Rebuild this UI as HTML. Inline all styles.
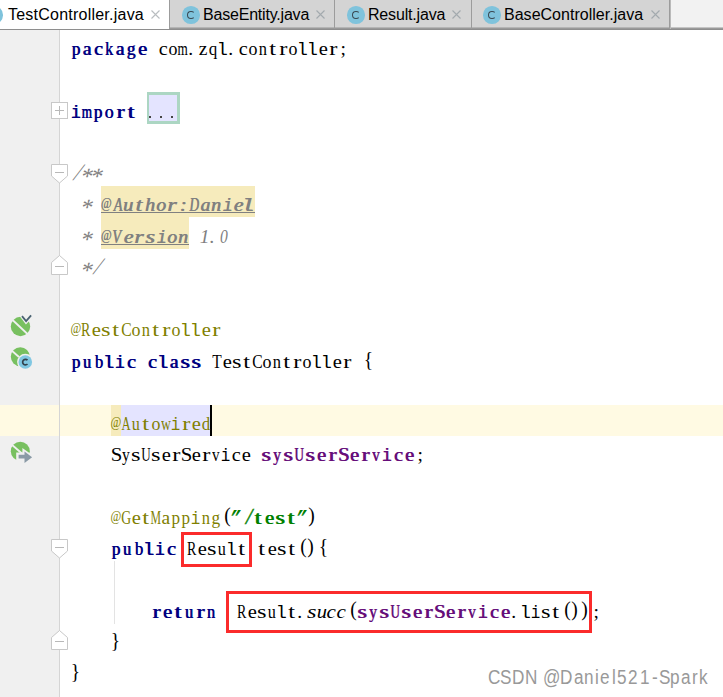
<!DOCTYPE html>
<html><head><meta charset="utf-8">
<style>
*{margin:0;padding:0;box-sizing:border-box}
html,body{width:723px;height:697px;overflow:hidden;background:#fff}
body{position:relative;font-family:"Liberation Sans",sans-serif}
.abs{position:absolute}
#tabs{position:absolute;left:0;top:0;width:723px;height:30px;background:linear-gradient(to bottom,#f2f2f2 0,#f2f2f2 27px,#c4c4c4 27px,#c4c4c4 28px,#9a9a9a 28px,#9a9a9a 29px,#8e8e8e 29px)}
#tabs .line{position:absolute;left:0;top:29px;width:723px;height:1px;background:#8e8e8e}
.tab{position:absolute;top:0;height:29px;background:linear-gradient(to bottom,#d4d4d4 0,#d4d4d4 27px,#b4b4b4 27px,#b4b4b4 28px,#999 28px)}
.tab.active{background:#fff}
.sep{position:absolute;top:0;width:2px;height:29px;background:linear-gradient(to right,#9c9c9c 0,#9c9c9c 1px,#bababa 1px)}
.tl{position:absolute;top:0;height:29px;line-height:29px;font-size:16px;color:#000;white-space:pre}
.tl span{position:absolute;top:5px;line-height:20px}
.cic{position:absolute;width:17.5px;height:17.5px;border-radius:50%;background:#7fc3dc}
.cic::after{content:"";position:absolute;left:5.2px;top:4.9px;width:7.6px;height:8px;border:1.7px solid #3a4852;border-right-color:transparent;border-radius:50%;box-sizing:border-box}
.x{position:absolute;top:10px;width:9px;height:9px}
#gutter{position:absolute;left:0;top:30px;width:59px;height:667px;background:#f0f0f0}
#gline{position:absolute;left:59px;top:30px;width:1px;height:667px;background:#d5d5d5}
.ln{position:absolute;left:71px;height:31.25px;white-space:nowrap;font-family:"Liberation Serif",serif;font-size:19.5px;line-height:31.25px;margin-top:2.9px;color:#000}
.ln i{font-style:inherit}
.c10,.c11{display:inline-block;text-align:left}
.c10 i,.c11 i{display:inline-block}
.c10{width:10px}.c11{width:11px}
.kw{color:#000080;text-shadow:0.7px 0 0 #000080}
.an{color:#808000}
.st{color:#008000;text-shadow:0.7px 0 0 #008000}
.fd{color:#660e7a;text-shadow:0.7px 0 0 #660e7a}
.cm{font-style:italic;color:#808080}
.tg{font-style:italic;color:#808080;text-shadow:0.7px 0 0 #808080}
.it{font-style:italic}
.dots{color:#444}
.rb{position:absolute;border:3px solid #fb2b2b}
#wm i{position:absolute;top:0;font-style:normal;font-size:19.5px;line-height:19.5px;color:#999;transform:scaleX(0.88);transform-origin:0 0;white-space:pre}
#wm{position:absolute;left:0;top:668px}
</style></head><body>

<div id="tabs">
  <div class="tab active" style="left:0;width:169px"></div>
  <div class="cic" style="left:-15px;top:6px"></div>
  <div class="tl" style="left:8px"><span style="letter-spacing:0.23px">TestController.java</span></div>
  <svg class="x" style="left:151px" viewBox="0 0 9 9"><path d="M0.5 0.5L8.5 8.5M8.5 0.5L0.5 8.5" stroke="#b9bdc0" stroke-width="1.1"/></svg>
  <div class="sep" style="left:169px"></div>

  <div class="tab" style="left:170px;width:164px"></div>
  <div class="cic" style="left:182px;top:6px"></div>
  <div class="tl" style="left:203px"><span style="letter-spacing:-0.2px">BaseEntity.java</span></div>
  <svg class="x" style="left:316px" viewBox="0 0 9 9"><path d="M0.5 0.5L8.5 8.5M8.5 0.5L0.5 8.5" stroke="#a3aaae" stroke-width="1.1"/></svg>
  <div class="sep" style="left:334px"></div>

  <div class="tab" style="left:335px;width:136px"></div>
  <div class="cic" style="left:347px;top:6px"></div>
  <div class="tl" style="left:368px"><span style="letter-spacing:-0.18px">Result.java</span></div>
  <svg class="x" style="left:452px" viewBox="0 0 9 9"><path d="M0.5 0.5L8.5 8.5M8.5 0.5L0.5 8.5" stroke="#a3aaae" stroke-width="1.1"/></svg>
  <div class="sep" style="left:471px"></div>

  <div class="tab" style="left:472px;width:197px"></div>
  <div class="cic" style="left:483px;top:6px"></div>
  <div class="tl" style="left:504px"><span style="letter-spacing:0.02px">BaseController.java</span></div>
  <svg class="x" style="left:651px" viewBox="0 0 9 9"><path d="M0.5 0.5L8.5 8.5M8.5 0.5L0.5 8.5" stroke="#a3aaae" stroke-width="1.1"/></svg>
  <div class="sep" style="left:669px"></div>
  <div class="line"></div>
</div>

<div id="gutter"></div>
<!-- caret row -->
<div class="abs" style="left:0;top:405px;width:723px;height:31px;background:#fffae3"></div>
<div id="gline"></div>

<!-- highlights -->
<div class="abs" style="left:147px;top:92px;width:33px;height:32px;background:#e4e4ff;border:3px solid #acd6c3;border-left-width:2px"></div>
<div class="abs" style="left:149px;top:116px;width:2px;height:2px;background:#444"></div><div class="abs" style="left:160px;top:116px;width:2px;height:2px;background:#444"></div><div class="abs" style="left:171px;top:116px;width:2px;height:2px;background:#444"></div>
<div class="abs" style="left:101px;top:186px;width:154px;height:31px;background:#f6ebbc"></div>
<div class="abs" style="left:101px;top:217px;width:88px;height:32px;background:#f6ebbc"></div>
<div class="abs" style="left:111px;top:405px;width:10px;height:31px;background:#f6ebbc"></div>
<div class="abs" style="left:121px;top:405px;width:89px;height:31px;background:#e4e4ff"></div>
<div class="abs" style="left:210px;top:405px;width:2px;height:31px;background:#000"></div>
<div class="abs" style="left:114px;top:561px;width:1px;height:63px;background:#e3e3e3"></div>

<!-- code lines: top = 30 + (i-1)*31.25 + off -->
<div id="code">
<div class="ln" style="top:30px"><span class="kw"><i class="c11"><i style="margin-left:0.35px;transform:scaleX(0.876);transform-origin:4.65px 0">p</i></i><i class="c11"><i style="margin-left:0.46px">a</i></i><i class="c11"><i style="margin-left:0.60px;transform:scaleX(1.039);transform-origin:4.40px 0">c</i></i><i class="c11"><i style="margin-left:-0.06px;transform:scaleX(0.810);transform-origin:5.06px 0">k</i></i><i class="c11"><i style="margin-left:0.46px">a</i></i><i class="c11"><i style="margin-left:-0.11px;transform:scaleX(0.890);transform-origin:5.11px 0">g</i></i><i class="c11"><i style="margin-left:0.63px;transform:scaleX(1.053);transform-origin:4.37px 0">e</i></i></span><i class="c10"></i><i class="c10"><i style="margin-left:0.60px;transform:scaleX(1.039);transform-origin:4.40px 0">c</i></i><i class="c10"><i style="margin-left:0.12px;transform:scaleX(0.920);transform-origin:4.88px 0">o</i></i><i class="c10"><i style="margin-left:-2.64px;transform:scaleX(0.678);transform-origin:7.64px 0">m</i></i><i class="c10"><i style="margin-left:0.21px">.</i></i><i class="c10"><i style="margin-left:0.68px">z</i></i><i class="c10"><i style="margin-left:-0.05px;transform:scaleX(0.874);transform-origin:5.05px 0">q</i></i><i class="c10"><i style="margin-left:-1.25px;font-family:Liberation Mono;font-size:18.5px">l</i></i><i class="c10"><i style="margin-left:0.21px">.</i></i><i class="c10"><i style="margin-left:0.60px;transform:scaleX(1.039);transform-origin:4.40px 0">c</i></i><i class="c10"><i style="margin-left:0.12px;transform:scaleX(0.920);transform-origin:4.88px 0">o</i></i><i class="c10"><i style="margin-left:0.05px;transform:scaleX(0.844);transform-origin:4.95px 0">n</i></i><i class="c10"><i style="margin-left:2.25px;transform:scaleX(1.250);transform-origin:2.75px 0">t</i></i><i class="c10"><i style="margin-left:1.64px;transform:scaleX(1.250);transform-origin:3.36px 0">r</i></i><i class="c10"><i style="margin-left:0.12px;transform:scaleX(0.920);transform-origin:4.88px 0">o</i></i><i class="c10"><i style="margin-left:-1.25px;font-family:Liberation Mono;font-size:18.5px">l</i></i><i class="c10"><i style="margin-left:-1.25px;font-family:Liberation Mono;font-size:18.5px">l</i></i><i class="c10"><i style="margin-left:0.63px;transform:scaleX(1.053);transform-origin:4.37px 0">e</i></i><i class="c10"><i style="margin-left:1.64px;transform:scaleX(1.250);transform-origin:3.36px 0">r</i></i><i class="c10"><i style="margin-left:2.53px">;</i></i></div>
<div class="ln" style="top:93px"><span class="kw"><i class="c11"><i style="margin-left:-0.73px;font-family:Liberation Mono;font-size:18.5px;transform:scaleX(0.857);transform-origin:5.73px 0">i</i></i><i class="c11"><i style="margin-left:-2.64px;transform:scaleX(0.678);transform-origin:7.64px 0">m</i></i><i class="c11"><i style="margin-left:0.35px;transform:scaleX(0.876);transform-origin:4.65px 0">p</i></i><i class="c11"><i style="margin-left:0.12px;transform:scaleX(0.920);transform-origin:4.88px 0">o</i></i><i class="c11"><i style="margin-left:1.64px;transform:scaleX(1.250);transform-origin:3.36px 0">r</i></i><i class="c11"><i style="margin-left:2.25px;transform:scaleX(1.250);transform-origin:2.75px 0">t</i></i></span></div>
<div class="ln" style="top:155px"><span class="cm"><i class="c10"><i style="margin-left:2.00px;transform:skewX(-19deg) scaleY(1.2);transform-origin:3.00px 22.4px">/</i></i><i class="c10"><i style="margin-left:-0.81px;transform:translate(2.5px,2px) skewX(-14deg) scale(1.2);transform-origin:5.81px 11.4px">*</i></i><i class="c10"><i style="margin-left:-0.81px;transform:translate(2.5px,2px) skewX(-14deg) scale(1.2);transform-origin:5.81px 11.4px">*</i></i></span></div>
<div class="ln" style="top:186px"><span class="cm"><i class="c10"></i><i class="c10"><i style="margin-left:-0.81px;transform:translate(2.5px,2px) skewX(-14deg) scale(1.2);transform-origin:5.81px 11.4px">*</i></i><i class="c10"></i></span><span class="tg"><i class="c11"><i style="margin-left:-4.09px;transform:scale(0.598,0.78);transform-origin:9.09px 9px">@</i></i><i class="c11"><i style="margin-left:-0.46px;transform:scaleX(0.728);transform-origin:5.46px 0">A</i></i><i class="c11"><i style="margin-left:-0.01px;transform:scaleX(1.053);transform-origin:5.01px 0">u</i></i><i class="c11"><i style="margin-left:1.67px;transform:scaleX(1.250);transform-origin:3.33px 0">t</i></i><i class="c11"><i style="margin-left:0.18px;transform:scaleX(1.032);transform-origin:4.82px 0">h</i></i><i class="c11"><i style="margin-left:0.12px">o</i></i><i class="c11"><i style="margin-left:0.78px;transform:scaleX(1.240);transform-origin:4.22px 0">r</i></i><i class="c11"><i style="margin-left:1.87px">:</i></i><i class="c11"><i style="margin-left:-1.78px;transform:scaleX(0.678);transform-origin:6.78px 0">D</i></i><i class="c11"><i style="margin-left:0.20px">a</i></i><i class="c11"><i style="margin-left:0.18px;transform:scaleX(1.031);transform-origin:4.82px 0">n</i></i><i class="c11"><i style="margin-left:0.09px;font-family:Liberation Mono;font-size:18.5px;transform:scaleX(0.833);transform-origin:4.91px 0">i</i></i><i class="c11"><i style="margin-left:0.59px;transform:scaleX(1.116);transform-origin:4.41px 0">e</i></i><i class="c11"><i style="margin-left:-1.60px;font-family:Liberation Mono;font-size:18.5px;transform:scaleX(1.250);transform-origin:6.60px 0">l</i></i></span></div>
<div class="ln" style="top:218px"><span class="cm"><i class="c10"></i><i class="c10"><i style="margin-left:-0.81px;transform:translate(2.5px,2px) skewX(-14deg) scale(1.2);transform-origin:5.81px 11.4px">*</i></i><i class="c10"></i></span><span class="tg"><i class="c11"><i style="margin-left:-4.09px;transform:scale(0.598,0.78);transform-origin:9.09px 9px">@</i></i><i class="c11"><i style="margin-left:-2.40px;transform:scaleX(0.744);transform-origin:7.40px 0">V</i></i><i class="c11"><i style="margin-left:0.59px;transform:scaleX(1.116);transform-origin:4.41px 0">e</i></i><i class="c11"><i style="margin-left:0.78px;transform:scaleX(1.240);transform-origin:4.22px 0">r</i></i><i class="c11"><i style="margin-left:1.38px;transform:scaleX(1.250);transform-origin:3.62px 0">s</i></i><i class="c11"><i style="margin-left:0.09px;font-family:Liberation Mono;font-size:18.5px;transform:scaleX(0.833);transform-origin:4.91px 0">i</i></i><i class="c11"><i style="margin-left:0.12px">o</i></i><i class="c11"><i style="margin-left:0.18px;transform:scaleX(1.031);transform-origin:4.82px 0">n</i></i></span><span class="cm"><i class="c10"></i><i class="c10"><i style="margin-left:0.82px">1</i></i><i class="c10"><i style="margin-left:0.69px">.</i></i><i class="c10"><i style="margin-left:-0.13px;transform:scaleX(0.800);transform-origin:5.13px 0">0</i></i></span></div>
<div class="ln" style="top:249px"><span class="cm"><i class="c10"></i><i class="c10"><i style="margin-left:-0.81px;transform:translate(2.5px,2px) skewX(-14deg) scale(1.2);transform-origin:5.81px 11.4px">*</i></i><i class="c10"><i style="margin-left:2.00px;transform:skewX(-19deg) scaleY(1.2);transform-origin:3.00px 22.4px">/</i></i></span></div>
<div class="ln" style="top:311px"><span class="an"><i class="c10"><i style="margin-left:-3.98px;transform:scale(0.598,0.78);transform-origin:8.98px 9px">@</i></i><i class="c10"><i style="margin-left:-1.77px;transform:scaleX(0.717);transform-origin:6.77px 0">R</i></i><i class="c10"><i style="margin-left:0.63px;transform:scaleX(1.053);transform-origin:4.37px 0">e</i></i><i class="c10"><i style="margin-left:1.16px;transform:scaleX(1.249);transform-origin:3.84px 0">s</i></i><i class="c10"><i style="margin-left:2.25px;transform:scaleX(1.250);transform-origin:2.75px 0">t</i></i><i class="c10"><i style="margin-left:-1.37px;transform:scaleX(0.800);transform-origin:6.37px 0">C</i></i><i class="c10"><i style="margin-left:0.12px;transform:scaleX(0.920);transform-origin:4.88px 0">o</i></i><i class="c10"><i style="margin-left:0.05px;transform:scaleX(0.844);transform-origin:4.95px 0">n</i></i><i class="c10"><i style="margin-left:2.25px;transform:scaleX(1.250);transform-origin:2.75px 0">t</i></i><i class="c10"><i style="margin-left:1.64px;transform:scaleX(1.250);transform-origin:3.36px 0">r</i></i><i class="c10"><i style="margin-left:0.12px;transform:scaleX(0.920);transform-origin:4.88px 0">o</i></i><i class="c10"><i style="margin-left:-1.25px;font-family:Liberation Mono;font-size:18.5px">l</i></i><i class="c10"><i style="margin-left:-1.25px;font-family:Liberation Mono;font-size:18.5px">l</i></i><i class="c10"><i style="margin-left:0.63px;transform:scaleX(1.053);transform-origin:4.37px 0">e</i></i><i class="c10"><i style="margin-left:1.64px;transform:scaleX(1.250);transform-origin:3.36px 0">r</i></i></span></div>
<div class="ln" style="top:343px"><span class="kw"><i class="c11"><i style="margin-left:0.35px;transform:scaleX(0.876);transform-origin:4.65px 0">p</i></i><i class="c11"><i style="margin-left:0.16px;transform:scaleX(0.830);transform-origin:4.84px 0">u</i></i><i class="c11"><i style="margin-left:0.50px;transform:scaleX(0.844);transform-origin:4.50px 0">b</i></i><i class="c11"><i style="margin-left:-1.25px;font-family:Liberation Mono;font-size:18.5px">l</i></i><i class="c11"><i style="margin-left:-0.73px;font-family:Liberation Mono;font-size:18.5px;transform:scaleX(0.857);transform-origin:5.73px 0">i</i></i><i class="c11"><i style="margin-left:0.60px;transform:scaleX(1.039);transform-origin:4.40px 0">c</i></i></span><i class="c10"></i><span class="kw"><i class="c11"><i style="margin-left:0.60px;transform:scaleX(1.039);transform-origin:4.40px 0">c</i></i><i class="c11"><i style="margin-left:-1.25px;font-family:Liberation Mono;font-size:18.5px">l</i></i><i class="c11"><i style="margin-left:0.46px">a</i></i><i class="c11"><i style="margin-left:1.16px;transform:scaleX(1.249);transform-origin:3.84px 0">s</i></i><i class="c11"><i style="margin-left:1.16px;transform:scaleX(1.249);transform-origin:3.84px 0">s</i></i></span><i class="c10"></i><i class="c10"><i style="margin-left:-0.97px;transform:scaleX(0.792);transform-origin:5.97px 0">T</i></i><i class="c10"><i style="margin-left:0.63px;transform:scaleX(1.053);transform-origin:4.37px 0">e</i></i><i class="c10"><i style="margin-left:1.16px;transform:scaleX(1.249);transform-origin:3.84px 0">s</i></i><i class="c10"><i style="margin-left:2.25px;transform:scaleX(1.250);transform-origin:2.75px 0">t</i></i><i class="c10"><i style="margin-left:-1.37px;transform:scaleX(0.800);transform-origin:6.37px 0">C</i></i><i class="c10"><i style="margin-left:0.12px;transform:scaleX(0.920);transform-origin:4.88px 0">o</i></i><i class="c10"><i style="margin-left:0.05px;transform:scaleX(0.844);transform-origin:4.95px 0">n</i></i><i class="c10"><i style="margin-left:2.25px;transform:scaleX(1.250);transform-origin:2.75px 0">t</i></i><i class="c10"><i style="margin-left:1.64px;transform:scaleX(1.250);transform-origin:3.36px 0">r</i></i><i class="c10"><i style="margin-left:0.12px;transform:scaleX(0.920);transform-origin:4.88px 0">o</i></i><i class="c10"><i style="margin-left:-1.25px;font-family:Liberation Mono;font-size:18.5px">l</i></i><i class="c10"><i style="margin-left:-1.25px;font-family:Liberation Mono;font-size:18.5px">l</i></i><i class="c10"><i style="margin-left:0.63px;transform:scaleX(1.053);transform-origin:4.37px 0">e</i></i><i class="c10"><i style="margin-left:1.64px;transform:scaleX(1.250);transform-origin:3.36px 0">r</i></i><i class="c10"></i><i class="c10"><i style="margin-left:1.82px;position:relative;top:-2.5px;transform:scaleY(1.1);transform-origin:4.68px 7px">{</i></i></div>
<div class="ln" style="top:405px"><i class="c10"></i><i class="c10"></i><i class="c10"></i><i class="c10"></i><span class="an"><i class="c10"><i style="margin-left:-3.98px;transform:scale(0.598,0.78);transform-origin:8.98px 9px">@</i></i><i class="c10"><i style="margin-left:-2.06px;transform:scaleX(0.647);transform-origin:7.06px 0">A</i></i><i class="c10"><i style="margin-left:0.16px;transform:scaleX(0.830);transform-origin:4.84px 0">u</i></i><i class="c10"><i style="margin-left:2.25px;transform:scaleX(1.250);transform-origin:2.75px 0">t</i></i><i class="c10"><i style="margin-left:0.12px;transform:scaleX(0.920);transform-origin:4.88px 0">o</i></i><i class="c10"><i style="margin-left:-2.01px;transform:scaleX(0.701);transform-origin:7.01px 0">w</i></i><i class="c10"><i style="margin-left:-0.73px;font-family:Liberation Mono;font-size:18.5px;transform:scaleX(0.857);transform-origin:5.73px 0">i</i></i><i class="c10"><i style="margin-left:1.64px;transform:scaleX(1.250);transform-origin:3.36px 0">r</i></i><i class="c10"><i style="margin-left:0.63px;transform:scaleX(1.053);transform-origin:4.37px 0">e</i></i><i class="c10"><i style="margin-left:-0.11px;transform:scaleX(0.863);transform-origin:5.11px 0">d</i></i></span></div>
<div class="ln" style="top:436px"><i class="c10"></i><i class="c10"></i><i class="c10"></i><i class="c10"></i><i class="c10"><i style="margin-left:-0.47px;transform:scaleX(1.068);transform-origin:5.47px 0">S</i></i><i class="c10"><i style="margin-left:0.04px;transform:scaleX(0.805);transform-origin:4.96px 0">y</i></i><i class="c10"><i style="margin-left:1.16px;transform:scaleX(1.249);transform-origin:3.84px 0">s</i></i><i class="c10"><i style="margin-left:-2.04px;transform:scaleX(0.671);transform-origin:7.04px 0">U</i></i><i class="c10"><i style="margin-left:1.16px;transform:scaleX(1.249);transform-origin:3.84px 0">s</i></i><i class="c10"><i style="margin-left:0.63px;transform:scaleX(1.053);transform-origin:4.37px 0">e</i></i><i class="c10"><i style="margin-left:1.64px;transform:scaleX(1.250);transform-origin:3.36px 0">r</i></i><i class="c10"><i style="margin-left:-0.47px;transform:scaleX(1.068);transform-origin:5.47px 0">S</i></i><i class="c10"><i style="margin-left:0.63px;transform:scaleX(1.053);transform-origin:4.37px 0">e</i></i><i class="c10"><i style="margin-left:1.64px;transform:scaleX(1.250);transform-origin:3.36px 0">r</i></i><i class="c10"><i style="margin-left:0.12px;transform:scaleX(0.779);transform-origin:4.88px 0">v</i></i><i class="c10"><i style="margin-left:-0.73px;font-family:Liberation Mono;font-size:18.5px;transform:scaleX(0.857);transform-origin:5.73px 0">i</i></i><i class="c10"><i style="margin-left:0.60px;transform:scaleX(1.039);transform-origin:4.40px 0">c</i></i><i class="c10"><i style="margin-left:0.63px;transform:scaleX(1.053);transform-origin:4.37px 0">e</i></i><i class="c10"></i><span class="fd"><i class="c11"><i style="margin-left:1.16px;transform:scaleX(1.249);transform-origin:3.84px 0">s</i></i><i class="c11"><i style="margin-left:0.04px;transform:scaleX(0.805);transform-origin:4.96px 0">y</i></i><i class="c11"><i style="margin-left:1.16px;transform:scaleX(1.249);transform-origin:3.84px 0">s</i></i><i class="c11"><i style="margin-left:-2.04px;transform:scaleX(0.671);transform-origin:7.04px 0">U</i></i><i class="c11"><i style="margin-left:1.16px;transform:scaleX(1.249);transform-origin:3.84px 0">s</i></i><i class="c11"><i style="margin-left:0.63px;transform:scaleX(1.053);transform-origin:4.37px 0">e</i></i><i class="c11"><i style="margin-left:1.64px;transform:scaleX(1.250);transform-origin:3.36px 0">r</i></i><i class="c11"><i style="margin-left:-0.47px;transform:scaleX(1.068);transform-origin:5.47px 0">S</i></i><i class="c11"><i style="margin-left:0.63px;transform:scaleX(1.053);transform-origin:4.37px 0">e</i></i><i class="c11"><i style="margin-left:1.64px;transform:scaleX(1.250);transform-origin:3.36px 0">r</i></i><i class="c11"><i style="margin-left:0.12px;transform:scaleX(0.779);transform-origin:4.88px 0">v</i></i><i class="c11"><i style="margin-left:-0.73px;font-family:Liberation Mono;font-size:18.5px;transform:scaleX(0.857);transform-origin:5.73px 0">i</i></i><i class="c11"><i style="margin-left:0.60px;transform:scaleX(1.039);transform-origin:4.40px 0">c</i></i><i class="c11"><i style="margin-left:0.63px;transform:scaleX(1.053);transform-origin:4.37px 0">e</i></i></span><i class="c10"><i style="margin-left:2.53px">;</i></i></div>
<div class="ln" style="top:499px"><i class="c10"></i><i class="c10"></i><i class="c10"></i><i class="c10"></i><span class="an"><i class="c10"><i style="margin-left:-3.98px;transform:scale(0.598,0.78);transform-origin:8.98px 9px">@</i></i><i class="c10"><i style="margin-left:-2.14px;transform:scaleX(0.702);transform-origin:7.14px 0">G</i></i><i class="c10"><i style="margin-left:0.63px;transform:scaleX(1.053);transform-origin:4.37px 0">e</i></i><i class="c10"><i style="margin-left:2.25px;transform:scaleX(1.250);transform-origin:2.75px 0">t</i></i><i class="c10"><i style="margin-left:-3.66px;transform:scaleX(0.605);transform-origin:8.66px 0">M</i></i><i class="c10"><i style="margin-left:0.46px">a</i></i><i class="c10"><i style="margin-left:0.35px;transform:scaleX(0.876);transform-origin:4.65px 0">p</i></i><i class="c10"><i style="margin-left:0.35px;transform:scaleX(0.876);transform-origin:4.65px 0">p</i></i><i class="c10"><i style="margin-left:-0.73px;font-family:Liberation Mono;font-size:18.5px;transform:scaleX(0.857);transform-origin:5.73px 0">i</i></i><i class="c10"><i style="margin-left:0.05px;transform:scaleX(0.844);transform-origin:4.95px 0">n</i></i><i class="c10"><i style="margin-left:-0.11px;transform:scaleX(0.890);transform-origin:5.11px 0">g</i></i></span><i class="c10"><i style="margin-left:3.14px;position:relative;top:-2.5px;transform:scaleY(1.1);transform-origin:3.36px 7px">(</i></i><span class="st"><i class="c11"><i style="margin-left:1.02px;transform:translateX(-3.5px) skewX(-30deg) scale(1.1,1.25);transform-origin:3.98px 15.5px">&quot;</i></i><i class="c11"><i style="margin-left:2.29px;transform:skewX(-14deg) scaleY(1.18);transform-origin:2.71px 23.5px">/</i></i><i class="c11"><i style="margin-left:2.25px;transform:scaleX(1.250);transform-origin:2.75px 0">t</i></i><i class="c11"><i style="margin-left:0.63px;transform:scaleX(1.053);transform-origin:4.37px 0">e</i></i><i class="c11"><i style="margin-left:1.16px;transform:scaleX(1.249);transform-origin:3.84px 0">s</i></i><i class="c11"><i style="margin-left:2.25px;transform:scaleX(1.250);transform-origin:2.75px 0">t</i></i><i class="c11"><i style="margin-left:1.02px;transform:translateX(-3.5px) skewX(-30deg) scale(1.1,1.25);transform-origin:3.98px 15.5px">&quot;</i></i></span><i class="c10"><i style="margin-left:0.37px;position:relative;top:-2.5px;transform:scaleY(1.1);transform-origin:3.13px 7px">)</i></i></div>
<div class="ln" style="top:530px"><i class="c10"></i><i class="c10"></i><i class="c10"></i><i class="c10"></i><span class="kw"><i class="c11"><i style="margin-left:0.35px;transform:scaleX(0.876);transform-origin:4.65px 0">p</i></i><i class="c11"><i style="margin-left:0.16px;transform:scaleX(0.830);transform-origin:4.84px 0">u</i></i><i class="c11"><i style="margin-left:0.50px;transform:scaleX(0.844);transform-origin:4.50px 0">b</i></i><i class="c11"><i style="margin-left:-1.25px;font-family:Liberation Mono;font-size:18.5px">l</i></i><i class="c11"><i style="margin-left:-0.73px;font-family:Liberation Mono;font-size:18.5px;transform:scaleX(0.857);transform-origin:5.73px 0">i</i></i><i class="c11"><i style="margin-left:0.60px;transform:scaleX(1.039);transform-origin:4.40px 0">c</i></i></span><i class="c10"></i><i class="c10"><i style="margin-left:-1.77px;transform:scaleX(0.717);transform-origin:6.77px 0">R</i></i><i class="c10"><i style="margin-left:0.63px;transform:scaleX(1.053);transform-origin:4.37px 0">e</i></i><i class="c10"><i style="margin-left:1.16px;transform:scaleX(1.249);transform-origin:3.84px 0">s</i></i><i class="c10"><i style="margin-left:0.16px;transform:scaleX(0.830);transform-origin:4.84px 0">u</i></i><i class="c10"><i style="margin-left:-1.25px;font-family:Liberation Mono;font-size:18.5px">l</i></i><i class="c10"><i style="margin-left:2.25px;transform:scaleX(1.250);transform-origin:2.75px 0">t</i></i><i class="c10"></i><i class="c10"><i style="margin-left:2.25px;transform:scaleX(1.250);transform-origin:2.75px 0">t</i></i><i class="c10"><i style="margin-left:0.63px;transform:scaleX(1.053);transform-origin:4.37px 0">e</i></i><i class="c10"><i style="margin-left:1.16px;transform:scaleX(1.249);transform-origin:3.84px 0">s</i></i><i class="c10"><i style="margin-left:2.25px;transform:scaleX(1.250);transform-origin:2.75px 0">t</i></i><i class="c10"><i style="margin-left:3.14px;position:relative;top:-2.5px;transform:scaleY(1.1);transform-origin:3.36px 7px">(</i></i><i class="c10"><i style="margin-left:0.37px;position:relative;top:-2.5px;transform:scaleY(1.1);transform-origin:3.13px 7px">)</i></i><i class="c10"><i style="margin-left:1.82px;position:relative;top:-2.5px;transform:scaleY(1.1);transform-origin:4.68px 7px">{</i></i></div>
<div class="ln" style="top:593px"><i class="c10"></i><i class="c10"></i><i class="c10"></i><i class="c10"></i><i class="c10"></i><i class="c10"></i><i class="c10"></i><i class="c10"></i><span class="kw"><i class="c11"><i style="margin-left:1.64px;transform:scaleX(1.250);transform-origin:3.36px 0">r</i></i><i class="c11"><i style="margin-left:0.63px;transform:scaleX(1.053);transform-origin:4.37px 0">e</i></i><i class="c11"><i style="margin-left:2.25px;transform:scaleX(1.250);transform-origin:2.75px 0">t</i></i><i class="c11"><i style="margin-left:0.16px;transform:scaleX(0.830);transform-origin:4.84px 0">u</i></i><i class="c11"><i style="margin-left:1.64px;transform:scaleX(1.250);transform-origin:3.36px 0">r</i></i><i class="c11"><i style="margin-left:0.05px;transform:scaleX(0.844);transform-origin:4.95px 0">n</i></i></span><i class="c10"></i><i class="c10"></i><i class="c10"><i style="margin-left:-1.77px;transform:scaleX(0.717);transform-origin:6.77px 0">R</i></i><i class="c10"><i style="margin-left:0.63px;transform:scaleX(1.053);transform-origin:4.37px 0">e</i></i><i class="c10"><i style="margin-left:1.16px;transform:scaleX(1.249);transform-origin:3.84px 0">s</i></i><i class="c10"><i style="margin-left:0.16px;transform:scaleX(0.830);transform-origin:4.84px 0">u</i></i><i class="c10"><i style="margin-left:-1.25px;font-family:Liberation Mono;font-size:18.5px">l</i></i><i class="c10"><i style="margin-left:2.25px;transform:scaleX(1.250);transform-origin:2.75px 0">t</i></i><i class="c10"><i style="margin-left:0.21px">.</i></i><span class="it"><i class="c10"><i style="margin-left:1.38px;transform:scaleX(1.250);transform-origin:3.62px 0">s</i></i><i class="c10"><i style="margin-left:-0.01px;transform:scaleX(1.053);transform-origin:5.01px 0">u</i></i><i class="c10"><i style="margin-left:0.48px;transform:scaleX(1.083);transform-origin:4.52px 0">c</i></i><i class="c10"><i style="margin-left:0.48px;transform:scaleX(1.083);transform-origin:4.52px 0">c</i></i></span><i class="c10"><i style="margin-left:3.14px;position:relative;top:-2.5px;transform:scaleY(1.1);transform-origin:3.36px 7px">(</i></i><span class="fd"><i class="c11"><i style="margin-left:1.16px;transform:scaleX(1.249);transform-origin:3.84px 0">s</i></i><i class="c11"><i style="margin-left:0.04px;transform:scaleX(0.805);transform-origin:4.96px 0">y</i></i><i class="c11"><i style="margin-left:1.16px;transform:scaleX(1.249);transform-origin:3.84px 0">s</i></i><i class="c11"><i style="margin-left:-2.04px;transform:scaleX(0.671);transform-origin:7.04px 0">U</i></i><i class="c11"><i style="margin-left:1.16px;transform:scaleX(1.249);transform-origin:3.84px 0">s</i></i><i class="c11"><i style="margin-left:0.63px;transform:scaleX(1.053);transform-origin:4.37px 0">e</i></i><i class="c11"><i style="margin-left:1.64px;transform:scaleX(1.250);transform-origin:3.36px 0">r</i></i><i class="c11"><i style="margin-left:-0.47px;transform:scaleX(1.068);transform-origin:5.47px 0">S</i></i><i class="c11"><i style="margin-left:0.63px;transform:scaleX(1.053);transform-origin:4.37px 0">e</i></i><i class="c11"><i style="margin-left:1.64px;transform:scaleX(1.250);transform-origin:3.36px 0">r</i></i><i class="c11"><i style="margin-left:0.12px;transform:scaleX(0.779);transform-origin:4.88px 0">v</i></i><i class="c11"><i style="margin-left:-0.73px;font-family:Liberation Mono;font-size:18.5px;transform:scaleX(0.857);transform-origin:5.73px 0">i</i></i><i class="c11"><i style="margin-left:0.60px;transform:scaleX(1.039);transform-origin:4.40px 0">c</i></i><i class="c11"><i style="margin-left:0.63px;transform:scaleX(1.053);transform-origin:4.37px 0">e</i></i></span><i class="c10"><i style="margin-left:0.21px">.</i></i><i class="c10"><i style="margin-left:-1.25px;font-family:Liberation Mono;font-size:18.5px">l</i></i><i class="c10"><i style="margin-left:-0.73px;font-family:Liberation Mono;font-size:18.5px;transform:scaleX(0.857);transform-origin:5.73px 0">i</i></i><i class="c10"><i style="margin-left:1.16px;transform:scaleX(1.249);transform-origin:3.84px 0">s</i></i><i class="c10"><i style="margin-left:2.25px;transform:scaleX(1.250);transform-origin:2.75px 0">t</i></i><i class="c10"><i style="margin-left:3.14px;position:relative;top:-2.5px;transform:scaleY(1.1);transform-origin:3.36px 7px">(</i></i><i class="c10"><i style="margin-left:0.37px;position:relative;top:-2.5px;transform:scaleY(1.1);transform-origin:3.13px 7px">)</i></i><i class="c10"><i style="margin-left:0.37px;position:relative;top:-2.5px;transform:scaleY(1.1);transform-origin:3.13px 7px">)</i></i><i class="c10"><i style="margin-left:2.53px">;</i></i></div>
<div class="ln" style="top:624px"><i class="c10"></i><i class="c10"></i><i class="c10"></i><i class="c10"></i><i class="c10"><i style="margin-left:-0.18px;position:relative;top:-2.5px;transform:scaleY(1.1);transform-origin:4.68px 7px">}</i></i></div>
<div class="ln" style="top:655px"><i class="c10"><i style="margin-left:-0.18px;position:relative;top:-2.5px;transform:scaleY(1.1);transform-origin:4.68px 7px">}</i></i></div>
</div>

<!-- tag underlines -->
<div class="abs" style="left:101px;top:212px;width:154px;height:1px;background:#808080"></div>
<div class="abs" style="left:101px;top:244px;width:88px;height:1px;background:#808080"></div>

<!-- fold markers -->
<svg class="abs" style="left:0;top:0" width="723" height="697">
  <g fill="#fff" stroke="#c8c8c8" stroke-width="1">
    <rect x="51.5" y="102.5" width="16" height="16"/>
    <path d="M51.5 164.5H67.5V176L59.5 183L51.5 176Z"/>
    <path d="M51.5 274.5H67.5V262.5L59.5 255.5L51.5 262.5Z"/>
    <path d="M51.5 539.5H67.5V551L59.5 558L51.5 551Z"/>
    <path d="M51.5 649.5H67.5V637.5L59.5 630.5L51.5 637.5Z"/>
  </g>
  <g stroke="#b8b8b8" stroke-width="1">
    <path d="M55 110.5H64M59.5 106V115"/>
    <path d="M55 172.5H64"/>
    <path d="M55 266.5H64"/>
    <path d="M55 547.5H64"/>
    <path d="M55 641.5H64"/>
  </g>
</svg>

<!-- gutter icons -->
<svg class="abs" style="left:0;top:0" width="60" height="697">
  <!-- bean with check -->
  <g>
    <circle cx="20.5" cy="326.5" r="9.7" fill="#78c060"/>
    <path d="M11 318.5L28 334.5" stroke="#f0f0f0" stroke-width="1.8"/>
    <path d="M21.3 315L26.1 321.3L32.3 314.8" stroke="#f0f0f0" stroke-width="4" fill="none"/>
    <path d="M22 316.2L26.1 321L31.1 315.3" stroke="#4a6272" stroke-width="1.8" fill="none"/>
  </g>
  <!-- bean with class -->
  <g>
    <circle cx="20.3" cy="356.7" r="9.5" fill="#78c060"/>
    <path d="M11 350L19 357" stroke="#f0f0f0" stroke-width="1.8"/>
    <circle cx="25.3" cy="362" r="8.2" fill="#f0f0f0"/>
    <circle cx="25.3" cy="362" r="6.8" fill="#80c7e2"/>
    <path d="M27.5 360.2A2.8 2.8 0 1 0 27.5 364" stroke="#34434e" stroke-width="1.7" fill="none"/>
  </g>
  <!-- bean with arrow -->
  <g>
    <circle cx="20.3" cy="451.2" r="9.5" fill="#78c060"/>
    <path d="M11 444L26 457" stroke="#f0f0f0" stroke-width="1.8"/>
    <path d="M17.3 453.5H23.5V450.2L33.5 457.2L23.5 464.2V460H17.3Z" fill="#f0f0f0" stroke="#f0f0f0" stroke-width="2.2"/>
    <path d="M18.6 454.8H24.5V451.6L32.1 457.2L24.5 462.9V458.6H18.6Z" fill="#8a9aa6"/>
  </g>
</svg>

<!-- red boxes -->
<div class="rb" style="left:181px;top:532px;width:71px;height:35px"></div>
<div class="rb" style="left:226px;top:591px;width:366px;height:42px"></div>

<!-- watermark -->
<div id="wm"><i style="left:488.3px">C</i><i style="left:500.2px">S</i><i style="left:512.4px">D</i><i style="left:525.4px">N</i><i style="left:543.4px">@</i><i style="left:560.3px">D</i><i style="left:573.8px">a</i><i style="left:583.8px">n</i><i style="left:595.4px">i</i><i style="left:600.3px">e</i><i style="left:611.9px">l</i><i style="left:616.8px">5</i><i style="left:628.1px">2</i><i style="left:640.2px">1</i><i style="left:651.9px">-</i><i style="left:658.8px">S</i><i style="left:670.1px">p</i><i style="left:681.3px">a</i><i style="left:692.1px">r</i><i style="left:699.0px">k</i></div>

</body></html>
